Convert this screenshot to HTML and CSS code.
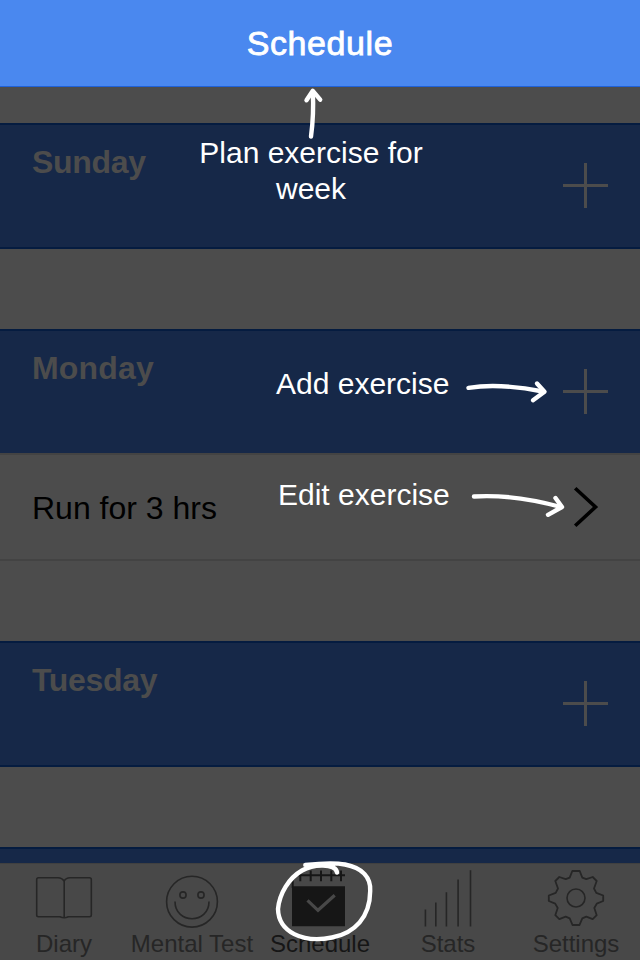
FILE: index.html
```html
<!DOCTYPE html>
<html lang="en">
<head>
<meta charset="utf-8">
<title>Schedule</title>
<link rel="stylesheet" href="styles.css">
</head>
<body>
<div class="app">
  <header class="navbar"><h1>Schedule</h1></header>
  <main class="days">
    <section class="day">
      <h2 class="tight">Sunday</h2>
      <svg class="plus" viewBox="0 0 46 46"><path d="M0 23.5H45M22.5 1V46"/></svg>
    </section>
    <section class="day has-items">
      <h2>Monday</h2>
      <svg class="plus" viewBox="0 0 46 46"><path d="M0 23.5H45M22.5 1V46"/></svg>
    </section>
    <div class="item">
      <span>Run for 3 hrs</span>
      <svg class="chevron" viewBox="0 0 24 40"><path d="M1.2 1.2L21.500 20L1.2 38.8"/></svg>
    </div>
    <section class="day">
      <h2 class="tight">Tuesday</h2>
      <svg class="plus" viewBox="0 0 46 46"><path d="M0 23.5H45M22.5 1V46"/></svg>
    </section>
    <section class="day"></section>
  </main>
  <nav class="tabbar">
    <a class="tab">
      <svg viewBox="0 0 128 66"><path d="M64 17Q62 13.700 58 13.700H38.500Q36.700 13.700 36.700 15.500V51Q36.700 52.700 38.500 52.700H60Q64.200 54.800 68.300 52.700H89.500Q91.300 52.700 91.300 51V15.500Q91.300 13.700 89.500 13.700H70Q66 13.700 64.200 17V53.500"/></svg>
      <span>Diary</span>
    </a>
    <a class="tab">
      <svg viewBox="0 0 128 66"><circle cx="64" cy="37.700" r="25.400"/><circle cx="55" cy="31" r="3.100"/><circle cx="73" cy="31" r="3.100"/><path d="M47 37.500C47 60.500 81 60.500 81 37.500"/></svg>
      <span>Mental Test</span>
    </a>
    <a class="tab active">
      <svg viewBox="0 0 128 66"><path d="M38 11.200H89M36.700 12V24M44.300 6.500V17.200M54.700 6.500V17.200M65 6.500V17.200M75.300 6.500V17.200M85 6.500V17.200"/><path class="page" d="M36 22.300H89V62.300H36Z"/><path class="check" d="M51.500 36.300L62 46.300L78.700 31.200"/></svg>
      <span>Schedule</span>
    </a>
    <a class="tab">
      <svg viewBox="0 0 128 66"><path d="M41.400 45.500V62.500M51.800 38.500V62.500M62.400 28.200V62.500M74.100 15.500V62.500M86.500 6.200V62.500"/></svg>
      <span>Stats</span>
    </a>
    <a class="tab">
      <svg viewBox="0 0 128 66"><path class="gear" d="M60.300 7H67.700L70.300 13.600L74.300 15.200L80.700 13L84.700 17L82 24.500L84.300 28.800L91.200 31.500V37L84.800 39.600L82.300 44L84.700 51.200L80.700 55.200L74.300 52.700L70.300 54.400L67.500 61H60.500L57.700 54.400L53.700 52.700L47.300 55.200L43.300 51.200L45.700 44L43.200 39.600L36.800 37V31.500L43.700 28.800L46 24.500L43.300 17L47.300 13L53.700 15.200L57.700 13.600Z"/><circle cx="64" cy="34" r="9"/></svg>
      <span>Settings</span>
    </a>
  </nav>
  <div class="coach">
    <p class="tip tip-plan">Plan exercise for week</p>
    <p class="tip tip-add">Add exercise</p>
    <p class="tip tip-edit">Edit exercise</p>
    <svg class="marks" viewBox="0 0 640 960">
      <path d="M311 136.500Q314 114 312.800 92"/><path d="M306.500 100.300L312.800 90.800L320.200 99.700"/>
      <path d="M468.500 387.800Q500 383 543 391.500"/><path d="M537 383.500L544.500 391.800L533 400.200"/>
      <path d="M474 496.500Q513 494 561 507"/><path d="M555.500 498L562 507L548 514.800"/>
      <path d="M305.300 864.900C325 862.800 336 862.700 345 864.500C363 868 371 878 370.200 891C370 917 355 933 332 937.500C303 943.500 278.500 932 278 909C279.500 893 289 878 302 870.500C309 866.500 316 865.300 323 865.500C331 865.700 336.500 868 337 872.500"/>
    </svg>
  </div>
</div>
</body>
</html>
```
FILE: styles.css
```css
* { box-sizing: border-box; }
body { margin: 0; font-family: "Liberation Sans", Arial, sans-serif; background: #4c4c4c; }
.app { position: relative; width: 640px; height: 960px; overflow: hidden; display: flex; flex-direction: column; background: #4c4c4c; }
svg { fill: none; display: block; }
h1, h2, p { margin: 0; }

.navbar { flex: none; height: 87px; background: #4a88ef; border-bottom: 1px solid #1f62d8; display: flex; justify-content: center; }
.navbar h1 { font-size: 34px; font-weight: 400; line-height: 86px; letter-spacing: 0.6px; color: #fff; -webkit-text-stroke: 0.8px #fff; }

.days { flex: 1; min-height: 0; overflow: hidden; padding-top: 36px; }
.day { height: 126px; margin-bottom: 80px; padding: 18px 31px 0 32px; display: flex; justify-content: space-between; background: #162848; border: solid #051c40; border-width: 2px 0; }
.day.has-items { height: 124px; margin-bottom: 0; border-bottom: 0; }
.day h2 { font-size: 32px; line-height: 38px; letter-spacing: 0.2px; color: #4c4c4c; }
.day h2.tight { letter-spacing: -0.3px; }
.plus { width: 46px; height: 46px; margin-top: 19px; stroke: #4c4c4c; stroke-width: 3; }
.item { height: 108px; margin-bottom: 80px; padding: 0 42px 0 32px; display: flex; align-items: center; justify-content: space-between; border: solid #434343; border-width: 2px 0; font-size: 32px; color: #000; }
.item span { padding-top: 2px; }
.chevron { width: 24px; height: 40px; stroke: #000; stroke-width: 3.6; overflow: visible; }

.tabbar { flex: none; height: 97px; display: grid; grid-template-columns: repeat(5, 1fr); background: #484848; border-top: 1px solid #404040; }
.tab { display: flex; flex-direction: column; align-items: center; color: #262626; font-size: 24px; line-height: 28px; white-space: nowrap; }
.tab svg { width: 128px; height: 66px; stroke: #262626; stroke-width: 1.6; stroke-linejoin: round; }
.tab .gear { stroke-width: 1.8; }
.tab.active { color: #161616; }
.tab.active svg { stroke: #161616; stroke-width: 2; stroke-linejoin: miter; }
.tab .page { fill: #161616; stroke: none; }
.tab .check { stroke: #484848; stroke-width: 3.2; }

.coach { position: absolute; inset: 0; }
.tip { position: absolute; color: #fff; font-size: 30px; line-height: 36px; text-align: center; white-space: nowrap; }
.tip-plan { left: 191px; top: 135px; width: 240px; white-space: normal; }
.tip-add { left: 276px; top: 366px; }
.tip-edit { left: 278px; top: 477px; }
.marks { position: absolute; inset: 0; width: 640px; height: 960px; stroke: #fff; stroke-width: 4.4; stroke-linecap: round; stroke-linejoin: round; }
```
